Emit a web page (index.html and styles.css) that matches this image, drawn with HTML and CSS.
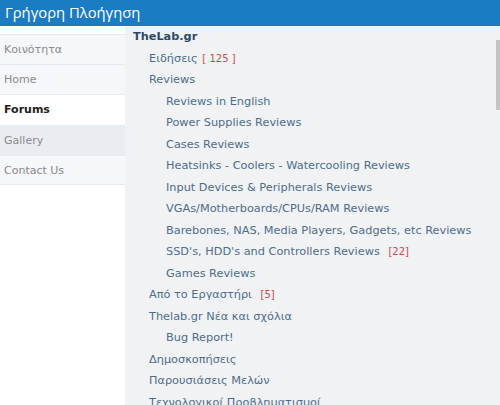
FILE: index.html
```html
<!DOCTYPE html>
<html lang="el">
<head>
<meta charset="utf-8">
<link rel="stylesheet" href="styles.css">
</head>
<body>
<div class="header">Γρήγορη Πλοήγηση</div>
<div class="main">
  <div class="sidebar">
    <div class="tab">Κοινότητα</div>
    <div class="tab">Home</div>
    <div class="tab active">Forums</div>
    <div class="tab hover">Gallery</div>
    <div class="tab last">Contact Us</div>
  </div>
  <div class="panel">
    <div class="row root">TheLab.gr</div>
    <div class="row l1">Ειδήσεις <span class="count">[ 125 ]</span></div>
    <div class="row l1">Reviews</div>
    <div class="row l2">Reviews in English</div>
    <div class="row l2">Power Supplies Reviews</div>
    <div class="row l2">Cases Reviews</div>
    <div class="row l2">Heatsinks - Coolers - Watercooling Reviews</div>
    <div class="row l2">Input Devices &amp; Peripherals Reviews</div>
    <div class="row l2">VGAs/Motherboards/CPUs/RAM Reviews</div>
    <div class="row l2">Barebones, NAS, Media Players, Gadgets, etc Reviews</div>
    <div class="row l2">SSD's, HDD's and Controllers Reviews <span class="count gap">[22]</span></div>
    <div class="row l2">Games Reviews</div>
    <div class="row l1">Από το Εργαστήρι <span class="count gap">[5]</span></div>
    <div class="row l1">Thelab.gr Νέα και σχόλια</div>
    <div class="row l2">Bug Report!</div>
    <div class="row l1">Δημοσκοπήσεις</div>
    <div class="row l1">Παρουσιάσεις Μελών</div>
    <div class="row l1">Τεχνολογικοί Προβληματισμοί</div>
    <div class="scrollbar"></div>
  </div>
</div>
</body>
</html>
```
FILE: styles.css
```css
html, body {
  margin: 0;
  padding: 0;
  height: 100%;
  overflow: hidden;
  background: #ffffff;
}
body {
  font-family: "DejaVu Sans", Verdana, sans-serif;
  font-size: 11.3px;
}
.header {
  height: 26px;
  line-height: 25px;
  background: #1a7cc2;
  color: #ffffff;
  font-family: "Open Sans", "Noto Sans", sans-serif;
  font-size: 14.8px;
  padding-left: 5px;
}
.main {
  display: flex;
  height: 379px;
}
.sidebar {
  width: 125px;
  flex: none;
  padding-top: 8px;
  background: #ffffff;
}
.tab {
  box-sizing: border-box;
  height: 30.2px;
  line-height: 29px;
  padding-left: 4px;
  color: #8a8a8a;
  font-size: 11px;
  background: #f5f7fa;
  border-top: 1px solid #e6e9ee;
}
.tab.active {
  background: #ffffff;
  color: #222222;
  font-weight: bold;
}
.tab.hover {
  background: #e9edf1;
}
.tab.last {
  border-bottom: 1px solid #e6e9ee;
}
.panel {
  flex: 1;
  position: relative;
  background: #f0f2f4;
  overflow: hidden;
}
.row {
  height: 21.5px;
  line-height: 21.5px;
  white-space: nowrap;
  color: #4e6d8c;
}
.root {
  padding-left: 8px;
  font-weight: bold;
  color: #2d4b69;
}
.l1 {
  padding-left: 24px;
}
.l2 {
  padding-left: 41px;
}
.count {
  color: #d2474a;
  font-size: 10px;
  margin-left: 1px;
}
.count.gap {
  margin-left: 5px;
}
.scrollbar {
  position: absolute;
  right: 0;
  top: 14px;
  width: 4px;
  height: 70px;
  background: #c4c4c4;
}
```
